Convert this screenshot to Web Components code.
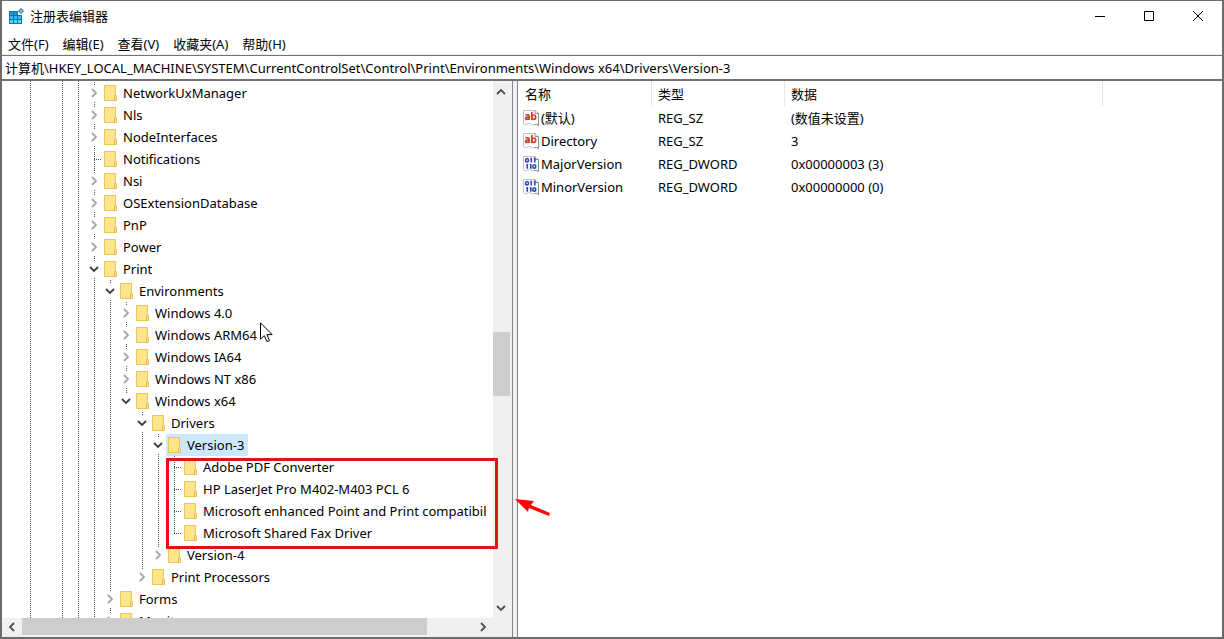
<!DOCTYPE html>
<html lang="zh-CN">
<head>
<meta charset="utf-8">
<title>注册表编辑器</title>
<style>
  html, body { height: 100%; }
  body {
    margin: 0;
    font: 13px/22px "Noto Sans", "Noto Sans CJK SC", sans-serif;
    color: #000;
    background: #fff;
  }
</style>
</head>
<body>
<registry-window>
  <title-bar slot="title">注册表编辑器</title-bar>
  <menu-bar slot="menu"></menu-bar>
  <address-bar slot="address" path="计算机\HKEY_LOCAL_MACHINE\SYSTEM\CurrentControlSet\Control\Print\Environments\Windows x64\Drivers\Version-3"></address-bar>
  <tree-pane slot="tree">
    <reg-key name="NetworkUxManager" state="closed"></reg-key>
    <reg-key name="Nls" state="closed"></reg-key>
    <reg-key name="NodeInterfaces" state="closed"></reg-key>
    <reg-key name="Notifications"></reg-key>
    <reg-key name="Nsi" state="closed"></reg-key>
    <reg-key name="OSExtensionDatabase" state="closed"></reg-key>
    <reg-key name="PnP" state="closed"></reg-key>
    <reg-key name="Power" state="closed"></reg-key>
    <reg-key name="Print" state="open">
      <reg-key name="Environments" state="open">
        <reg-key name="Windows 4.0" state="closed"></reg-key>
        <reg-key name="Windows ARM64" state="closed"></reg-key>
        <reg-key name="Windows IA64" state="closed"></reg-key>
        <reg-key name="Windows NT x86" state="closed"></reg-key>
        <reg-key name="Windows x64" state="open" last>
          <reg-key name="Drivers" state="open">
            <reg-key name="Version-3" state="open" selected>
              <reg-key name="Adobe PDF Converter"></reg-key>
              <reg-key name="HP LaserJet Pro M402-M403 PCL 6"></reg-key>
              <reg-key name="Microsoft enhanced Point and Print compatibil"></reg-key>
              <reg-key name="Microsoft Shared Fax Driver" last></reg-key>
            </reg-key>
            <reg-key name="Version-4" state="closed" last></reg-key>
          </reg-key>
          <reg-key name="Print Processors" state="closed" last></reg-key>
        </reg-key>
      </reg-key>
      <reg-key name="Forms" state="closed"></reg-key>
      <reg-key name="Monitors" state="closed"></reg-key>
    </reg-key>
  </tree-pane>
  <value-list slot="values"></value-list>
  <screen-marks slot="marks"></screen-marks>
</registry-window>

<script>
// Window frame: stacks the bars and puts the two panes side by side
class RegistryWindow extends HTMLElement {
  constructor() {
    super();
    this.attachShadow({ mode: 'open' });
    this.shadowRoot.innerHTML = `
      <style>
        :host {
          display: flex;
          flex-direction: column;
          position: relative;
          height: 100vh;
          box-sizing: border-box;
          border: 1px solid #6b6b6b;
          border-width: 1px 2px 2px;
          overflow: hidden;
        }
        .panes {
          flex: 1;
          min-height: 0;
          display: grid;
          grid-template-columns: 41.8% 6px minmax(0, 1fr);
        }
        .splitter {
          box-sizing: border-box;
          background: #f0f0f0;
          border: 1px solid #828790;
          border-width: 0 1px;
        }
      </style>
      <slot name="title"></slot>
      <slot name="menu"></slot>
      <slot name="address"></slot>
      <main class="panes">
        <slot name="tree"></slot>
        <div class="splitter"></div>
        <slot name="values"></slot>
      </main>
      <slot name="marks"></slot>
    `;
  }
}
customElements.define('registry-window', RegistryWindow);

class TitleBar extends HTMLElement {
  constructor() {
    super();
    this.attachShadow({ mode: 'open' });
    this.shadowRoot.innerHTML = `
      <style>
        :host { display: flex; align-items: center; height: 30px; padding: 0 0 2px 6px; }
        .name { flex: 1; margin-left: 6px; }
        .buttons { display: flex; align-self: stretch; }
        button {
          display: grid;
          place-items: center;
          width: 49px;
          padding: 0;
          border: 0;
          background: none;
        }
        svg { display: block; }
      </style>
      <svg width="16" height="16" viewBox="0 0 16 16">
        <path d="M1 3h9v4h4v9H1z" fill="#0b78b5"/>
        <path d="M2 4h3v3H2zM6 4h3v3H6z" fill="#2499d3"/>
        <path d="M2 8h3v3H2zM6 8h3v3H6zM10 8h3v3h-3z" fill="#37b8ec"/>
        <path d="M2 12h3v3H2zM6 12h3v3H6zM10 12h3v3h-3z" fill="#5fd2fa"/>
        <path d="M13 0l3 3-3 3-3-3z" fill="#17678f"/>
        <path d="M13 1l2 2-2 2-2-2z" fill="#7cc9e2"/>
      </svg>
      <span class="name"><slot></slot></span>
      <div class="buttons">
        <button aria-label="最小化"><svg width="10" height="10"><path d="M0 5.5h10" stroke="#000"/></svg></button>
        <button aria-label="最大化"><svg width="10" height="10"><path d="M.5.5h9v9h-9z" fill="none" stroke="#000"/></svg></button>
        <button aria-label="关闭"><svg width="10" height="10"><path d="M0 0l10 10M10 0L0 10" stroke="#000"/></svg></button>
      </div>
    `;
  }
}
customElements.define('title-bar', TitleBar);

class MenuBar extends HTMLElement {
  constructor() {
    super();
    this.attachShadow({ mode: 'open' });
    const items = ['文件(F)', '编辑(E)', '查看(V)', '收藏夹(A)', '帮助(H)'];
    this.shadowRoot.innerHTML = `
      <style>
        :host { display: block; border-bottom: 1px solid #f0f0f0; }
        nav { display: flex; align-items: flex-end; gap: 14px; height: 21px; padding-left: 6px; }
        button {
          padding: 0;
          border: 0;
          background: none;
          color: inherit;
          font: inherit;
          line-height: 20px;
        }
      </style>
      <nav>${items.map(item => `<button>${item}</button>`).join('')}</nav>
    `;
  }
}
customElements.define('menu-bar', MenuBar);

class AddressBar extends HTMLElement {
  constructor() {
    super();
    this.attachShadow({ mode: 'open' });
  }

  connectedCallback() {
    this.shadowRoot.innerHTML = `
      <style>
        :host { display: block; border: solid #737373; border-width: 1px 0 2px; }
        input {
          display: block;
          width: 100%;
          height: 23px;
          box-sizing: border-box;
          padding: 0 3px;
          border: 0;
          outline: 0;
          background: #fff;
          color: inherit;
          font: inherit;
        }
      </style>
      <input type="text" aria-label="地址">
    `;
    this.shadowRoot.querySelector('input').value = this.getAttribute('path');
  }
}
customElements.define('address-bar', AddressBar);

// One chevron, turned by its direction
class ChevronIcon extends HTMLElement {
  constructor() {
    super();
    this.attachShadow({ mode: 'open' });
    this.shadowRoot.innerHTML = `
      <style>
        :host { display: block; width: 10px; height: 10px; }
        :host([dir="right"]) svg { transform: rotate(90deg); }
        :host([dir="down"]) svg { transform: rotate(180deg); }
        :host([dir="left"]) svg { transform: rotate(270deg); }
        svg { display: block; }
      </style>
      <svg width="10" height="10" viewBox="0 0 10 10">
        <path d="M1 7L5 3L9 7" fill="none" stroke="currentColor" stroke-width="1.8"/>
      </svg>
    `;
  }
}
customElements.define('chevron-icon', ChevronIcon);

// A key of the tree; its subkeys are slotted below it, one column to the right
class RegKey extends HTMLElement {
  constructor() {
    super();
    this.attachShadow({ mode: 'open' });
  }

  connectedCallback() {
    const state = this.getAttribute('state');
    const dir = state === 'open' ? 'down' : 'right';
    this.shadowRoot.innerHTML = `
      <style>
        :host {
          display: block;
          background: repeating-linear-gradient(#555 0 1px, transparent 1px 2px) 8px 0 / 1px 100% no-repeat;
        }
        :host([last]) { background-size: 1px 12px; }
        .row { display: flex; height: 22px; }
        .toggle {
          display: flex;
          align-items: center;
          justify-content: center;
          flex: none;
          width: 16px;
          padding: 0;
          border: 0;
          background: none;
          color: #a6a6a6;
        }
        .toggle chevron-icon { padding: 3px 0; background: #fff; }
        .open { color: #404040; }
        .stub {
          flex: none;
          width: 8px;
          margin-left: 8px;
          background: repeating-linear-gradient(90deg, #555 0 1px, transparent 1px 2px) 0 11px / 100% 1px no-repeat;
        }
        .label {
          display: flex;
          align-items: center;
          gap: 6px;
          padding: 0 4px 0 2px;
          white-space: nowrap;
        }
        :host([selected]) .label { background: #cce8ff; }
        .label svg { flex: none; }
        .children { padding-left: 16px; }
      </style>
      <div class="row">
        ${state
          ? `<button class="toggle ${state}" aria-label="${state === 'open' ? '折叠' : '展开'}"><chevron-icon dir="${dir}"></chevron-icon></button>`
          : '<span class="stub"></span>'}
        <span class="label">
          <svg width="13" height="16" viewBox="0 0 13 16">
            <path d="M.5.5h11v9l1 1v5H.5z" fill="#ffe48c" stroke="#e6c75c"/>
            <path d="M10.5 15.5v-4l1-1.500" fill="none" stroke="#dcb63c"/>
          </svg>
          <span>${this.getAttribute('name')}</span>
        </span>
      </div>
      <div class="children"><slot></slot></div>
    `;
  }
}
customElements.define('reg-key', RegKey);

class TreePane extends HTMLElement {
  constructor() {
    super();
    this.attachShadow({ mode: 'open' });
    this.shadowRoot.innerHTML = `
      <style>
        :host {
          display: grid;
          grid-template: minmax(0, 1fr) 19px / minmax(0, 1fr) 19px;
          min-height: 0;
          background: #f0f0f0;
        }
        /* lines of the ancestor levels that lie above the visible part */
        .tree {
          --dots: repeating-linear-gradient(#555 0 1px, transparent 1px 2px);
          overflow: hidden;
          padding: 1px 0 0 84px;
          background:
            var(--dots) 28px 0 / 1px 100% no-repeat,
            var(--dots) 60px 0 / 1px 100% no-repeat,
            var(--dots) 76px 0 / 1px 100% no-repeat,
            #fff;
        }
        .bar { display: flex; align-items: center; color: #505050; }
        .vertical { flex-direction: column; padding: 6px 2px 5px 0; }
        .horizontal { padding: 0 5px 2px; }
        .track { flex: 1; display: flex; align-self: stretch; }
        .vertical .track { flex-direction: column; }
        .thumb { background: #cdcdcd; }
        .vertical .before { flex: 234; }
        .vertical .thumb { flex: 64; width: 17px; }
        .vertical .after { flex: 206; }
        .horizontal .track { padding: 0 5px; }
        .horizontal .thumb { flex: 405; }
        .horizontal .after { flex: 46; }
      </style>
      <div class="tree"><slot></slot></div>
      <div class="bar vertical">
        <chevron-icon dir="up"></chevron-icon>
        <div class="track"><i class="before"></i><i class="thumb"></i><i class="after"></i></div>
        <chevron-icon dir="down"></chevron-icon>
      </div>
      <div class="bar horizontal">
        <chevron-icon dir="left"></chevron-icon>
        <div class="track"><i class="thumb"></i><i class="after"></i></div>
        <chevron-icon dir="right"></chevron-icon>
      </div>
    `;
  }
}
customElements.define('tree-pane', TreePane);

// Page icon of a value: "string" draws ab, "binary" draws the digits
class ValueIcon extends HTMLElement {
  constructor() {
    super();
    this.attachShadow({ mode: 'open' });
  }

  connectedCallback() {
    const ab = `
      <g fill="none" stroke="#c8452d" stroke-width="1.7">
        <path d="M2.500 4.800h2.300q1.300 0 1.300 1.200v4M6 7.200H4.200Q2.600 7.200 2.600 8.400T4 9.400Q5.400 9.400 6 8.400"/>
        <path d="M8.800 1.800v8.200"/>
        <ellipse cx="10.700" cy="7.200" rx="2" ry="2.200"/>
      </g>`;
    const digits = `
      <g fill="none" stroke="#2b49b8" stroke-width="1.6">
        <ellipse cx="4" cy="4.200" rx="1.500" ry="1.700"/>
        <path d="M8.300 1.800v4.800M7.300 2.600h1M11.800 1.800v4.800M10.800 2.600h1M4.300 8v4.800M3.300 8.800h1M7.800 8v4.800M6.800 8.800h1"/>
        <ellipse cx="11.300" cy="10.400" rx="1.500" ry="1.700"/>
      </g>`;
    this.shadowRoot.innerHTML = `
      <style>
        :host { display: block; flex: none; }
        svg { display: block; }
      </style>
      <svg width="16" height="16" viewBox="0 0 16 16">
        <path d="M.5.5H12l3.500 3v12q-2-1.800-4-.8t-4-.700-3.500.2-3.500-.700z" fill="#fff" stroke="#c0c4c8"/>
        <path d="M12 .5v3h3.500v12q-2-1.800-4-.8" fill="none" stroke="#8c9196"/>
        ${this.getAttribute('kind') === 'string' ? ab : digits}
      </svg>
    `;
  }
}
customElements.define('value-icon', ValueIcon);

class ValueList extends HTMLElement {
  constructor() {
    super();
    this.attachShadow({ mode: 'open' });
    const values = [
      ['string', '(默认)', 'REG_SZ', '(数值未设置)'],
      ['string', 'Directory', 'REG_SZ', '3'],
      ['binary', 'MajorVersion', 'REG_DWORD', '0x00000003 (3)'],
      ['binary', 'MinorVersion', 'REG_DWORD', '0x00000000 (0)']
    ];
    this.shadowRoot.innerHTML = `
      <style>
        :host { display: block; overflow: hidden; background: #fff; }
        table { width: 100%; table-layout: fixed; border-collapse: separate; border-spacing: 0; }
        .short { width: 133px; }
        .long { width: 318px; }
        th, td { padding: 0 0 0 7px; text-align: left; font-weight: normal; white-space: nowrap; }
        th { height: 25px; box-sizing: border-box; }
        th + th { padding-left: 6px; border-left: 1px solid #e5e5e5; }
        td { height: 23px; }
        td:first-child { padding-left: 5px; }
        .name { display: flex; align-items: center; gap: 2px; }
      </style>
      <table>
        <colgroup><col class="short"><col class="short"><col class="long"><col></colgroup>
        <thead><tr><th>名称</th><th>类型</th><th>数据</th><th></th></tr></thead>
        <tbody>
          ${values.map(([kind, name, type, data]) => `
            <tr>
              <td><span class="name"><value-icon kind="${kind}"></value-icon>${name}</span></td>
              <td>${type}</td>
              <td>${data}</td>
              <td></td>
            </tr>`).join('')}
        </tbody>
      </table>
    `;
  }
}
customElements.define('value-list', ValueList);

// Red frame, arrow and mouse pointer drawn over the window
class ScreenMarks extends HTMLElement {
  constructor() {
    super();
    this.attachShadow({ mode: 'open' });
    this.shadowRoot.innerHTML = `
      <style>
        :host { position: absolute; inset: 0; pointer-events: none; }
        .frame {
          position: absolute;
          left: 164px;
          top: 457px;
          width: 332px;
          height: 91px;
          box-sizing: border-box;
          border: 3px solid #e81010;
        }
        svg { position: absolute; }
        .arrow { left: 513px; top: 497px; }
        .pointer { left: 258px; top: 321px; }
      </style>
      <div class="frame"></div>
      <svg class="arrow" width="37" height="22" viewBox="0 0 37 22">
        <path d="M0 1l19 2-3 4 19 8-1 3-20-8-1 4z" fill="#fa0505"/>
      </svg>
      <svg class="pointer" width="13" height="21" viewBox="0 0 13 21">
        <path d="M.5.8v16.400l3.800-3.600 2.600 6 2.600-1.100-2.600-5.900h5.200z" fill="#fff" stroke="#000"/>
      </svg>
    `;
  }
}
customElements.define('screen-marks', ScreenMarks);
</script>
</body>
</html>
